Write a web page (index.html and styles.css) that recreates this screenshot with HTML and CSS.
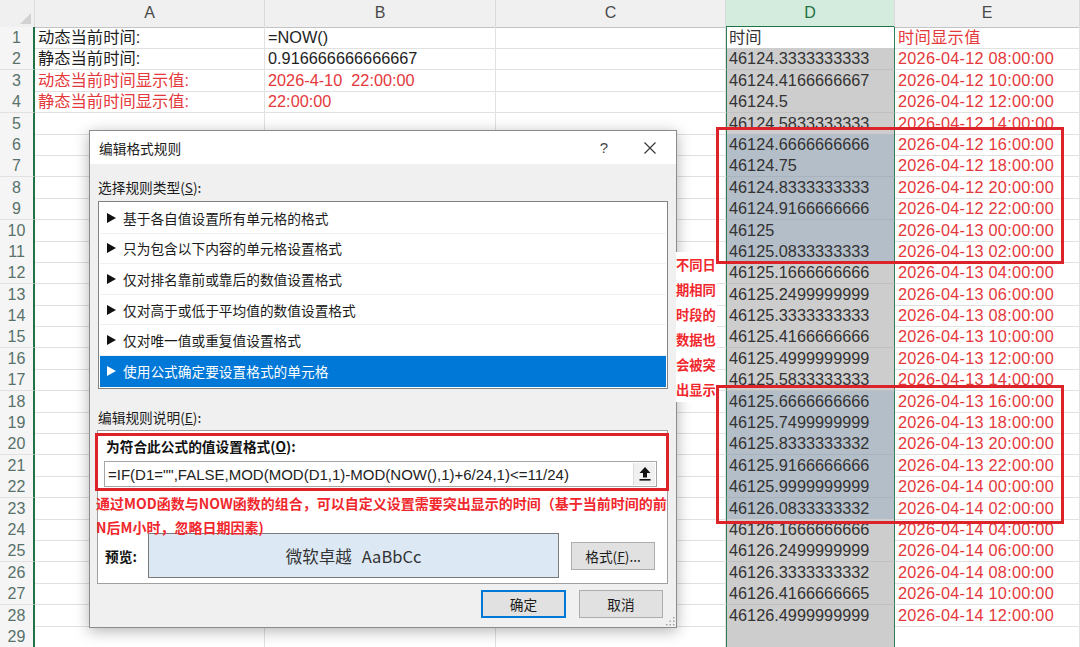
FILE: index.html
```html
<!DOCTYPE html>
<html lang="zh-CN">
<head>
<meta charset="utf-8">
<title>编辑格式规则</title>
<link rel="stylesheet" href="styles.css">
</head>
<body>
<div class="sheet">
  <div class="hdr">
    <div class="corner"></div><div>A</div><div>B</div><div>C</div><div class="hd">D</div><div>E</div>
  </div>
  <div class="row"><div class="rh">1</div><div>动态当前时间:</div><div>=NOW()</div><div></div><div class="d w">时间</div><div class="e">时间显示值</div></div>
  <div class="row"><div class="rh">2</div><div>静态当前时间:</div><div>0.916666666666667</div><div></div><div class="d">46124.3333333333</div><div class="e">2026-04-12 08:00:00</div></div>
  <div class="row"><div class="rh">3</div><div class="red">动态当前时间显示值:</div><div class="red">2026-4-10  22:00:00</div><div></div><div class="d">46124.4166666667</div><div class="e">2026-04-12 10:00:00</div></div>
  <div class="row"><div class="rh">4</div><div class="red">静态当前时间显示值:</div><div class="red">22:00:00</div><div></div><div class="d">46124.5</div><div class="e">2026-04-12 12:00:00</div></div>
  <div class="row"><div class="rh">5</div><div></div><div></div><div></div><div class="d">46124.5833333333</div><div class="e">2026-04-12 14:00:00</div></div>
  <div class="row"><div class="rh">6</div><div></div><div></div><div></div><div class="d hl">46124.6666666666</div><div class="e">2026-04-12 16:00:00</div></div>
  <div class="row"><div class="rh">7</div><div></div><div></div><div></div><div class="d hl">46124.75</div><div class="e">2026-04-12 18:00:00</div></div>
  <div class="row"><div class="rh">8</div><div></div><div></div><div></div><div class="d hl">46124.8333333333</div><div class="e">2026-04-12 20:00:00</div></div>
  <div class="row"><div class="rh">9</div><div></div><div></div><div></div><div class="d hl">46124.9166666666</div><div class="e">2026-04-12 22:00:00</div></div>
  <div class="row"><div class="rh">10</div><div></div><div></div><div></div><div class="d hl">46125</div><div class="e">2026-04-13 00:00:00</div></div>
  <div class="row"><div class="rh">11</div><div></div><div></div><div></div><div class="d hl">46125.0833333333</div><div class="e">2026-04-13 02:00:00</div></div>
  <div class="row"><div class="rh">12</div><div></div><div></div><div></div><div class="d">46125.1666666666</div><div class="e">2026-04-13 04:00:00</div></div>
  <div class="row"><div class="rh">13</div><div></div><div></div><div></div><div class="d">46125.2499999999</div><div class="e">2026-04-13 06:00:00</div></div>
  <div class="row"><div class="rh">14</div><div></div><div></div><div></div><div class="d">46125.3333333333</div><div class="e">2026-04-13 08:00:00</div></div>
  <div class="row"><div class="rh">15</div><div></div><div></div><div></div><div class="d">46125.4166666666</div><div class="e">2026-04-13 10:00:00</div></div>
  <div class="row"><div class="rh">16</div><div></div><div></div><div></div><div class="d">46125.4999999999</div><div class="e">2026-04-13 12:00:00</div></div>
  <div class="row"><div class="rh">17</div><div></div><div></div><div></div><div class="d">46125.5833333333</div><div class="e">2026-04-13 14:00:00</div></div>
  <div class="row"><div class="rh">18</div><div></div><div></div><div></div><div class="d hl">46125.6666666666</div><div class="e">2026-04-13 16:00:00</div></div>
  <div class="row"><div class="rh">19</div><div></div><div></div><div></div><div class="d hl">46125.7499999999</div><div class="e">2026-04-13 18:00:00</div></div>
  <div class="row"><div class="rh">20</div><div></div><div></div><div></div><div class="d hl">46125.8333333332</div><div class="e">2026-04-13 20:00:00</div></div>
  <div class="row"><div class="rh">21</div><div></div><div></div><div></div><div class="d hl">46125.9166666666</div><div class="e">2026-04-13 22:00:00</div></div>
  <div class="row"><div class="rh">22</div><div></div><div></div><div></div><div class="d hl">46125.9999999999</div><div class="e">2026-04-14 00:00:00</div></div>
  <div class="row"><div class="rh">23</div><div></div><div></div><div></div><div class="d hl">46126.0833333332</div><div class="e">2026-04-14 02:00:00</div></div>
  <div class="row"><div class="rh">24</div><div></div><div></div><div></div><div class="d">46126.1666666666</div><div class="e">2026-04-14 04:00:00</div></div>
  <div class="row"><div class="rh">25</div><div></div><div></div><div></div><div class="d">46126.2499999999</div><div class="e">2026-04-14 06:00:00</div></div>
  <div class="row"><div class="rh">26</div><div></div><div></div><div></div><div class="d">46126.3333333332</div><div class="e">2026-04-14 08:00:00</div></div>
  <div class="row"><div class="rh">27</div><div></div><div></div><div></div><div class="d">46126.4166666665</div><div class="e">2026-04-14 10:00:00</div></div>
  <div class="row"><div class="rh">28</div><div></div><div></div><div></div><div class="d">46126.4999999999</div><div class="e">2026-04-14 12:00:00</div></div>
  <div class="row"><div class="rh">29</div><div></div><div></div><div></div><div class="d"></div><div class="e"></div></div>

  <div class="dialog">
    <div class="dlg-title">
      <span class="dlg-name">编辑格式规则</span>
      <span class="dlg-help">?</span>
      <span class="dlg-close"><svg width="12" height="12" viewBox="0 0 12 12"><path d="M0.5 0.5L11.5 11.5M11.5 0.5L0.5 11.5" stroke="#333" stroke-width="1.1" fill="none"/></svg></span>
    </div>
    <div class="dlg-body">
      <div class="lbl lbl1">选择规则类型(<u>S</u>):</div>
      <div class="list">
        <div class="item"><span class="tri"></span>基于各自值设置所有单元格的格式</div>
        <div class="item"><span class="tri"></span>只为包含以下内容的单元格设置格式</div>
        <div class="item"><span class="tri"></span>仅对排名靠前或靠后的数值设置格式</div>
        <div class="item"><span class="tri"></span>仅对高于或低于平均值的数值设置格式</div>
        <div class="item"><span class="tri"></span>仅对唯一值或重复值设置格式</div>
        <div class="item sel"><span class="tri"></span>使用公式确定要设置格式的单元格</div>
      </div>
      <div class="lbl lbl2">编辑规则说明(<u>E</u>):</div>
      <div class="panel">
        <div class="ph">为符合此公式的值设置格式(<u>O</u>):</div>
        <div class="input">
          <span class="formula">=IF(D1="",FALSE,MOD(MOD(D1,1)-MOD(NOW(),1)+6/24,1)&lt;=11/24)</span>
          <span class="pick"><svg width="14" height="16" viewBox="0 0 14 16"><path d="M7 1L12.5 7H9V11.5H5V7H1.5Z" fill="#111"/><rect x="1.5" y="13" width="11" height="1.6" fill="#111"/></svg></span>
        </div>
        <div class="prev-row">
          <span class="prev-lbl">预览:</span>
          <div class="prev"><span>微软卓越</span><span>AaBbCc</span></div>
          <button class="btn fmt">格式(<u>F</u>)...</button>
        </div>
      </div>
      <div class="actions">
        <button class="btn ok">确定</button>
        <button class="btn">取消</button>
      </div>
    </div>
    <svg class="grip" width="10" height="10" viewBox="0 0 10 10"><g fill="#9a9a9a"><rect x="8" y="1" width="1.4" height="1.4"/><rect x="8" y="4.5" width="1.4" height="1.4"/><rect x="4.5" y="4.5" width="1.4" height="1.4"/><rect x="8" y="8" width="1.4" height="1.4"/><rect x="4.5" y="8" width="1.4" height="1.4"/><rect x="1" y="8" width="1.4" height="1.4"/></g></svg>
  </div>

  <div class="note">通过MOD函数与NOW函数的组合，可以自定义设置需要突出显示的时间（基于当前时间的前<br>N后M小时，忽略日期因素)</div>
  <div class="vnote">不同日期相同时段的数据也会被突出显示</div>
  <div class="mark m1"></div>
  <div class="mark m2"></div>
  <div class="mark m3"></div>
</div>
</body>
</html>
```
FILE: styles.css
```css
body {
  margin: 0;
  background: #fff;
}

.sheet {
  position: relative;
  width: 1080px;
  height: 647px;
  overflow: hidden;
  font-family: "Liberation Sans", "Noto Sans CJK SC", sans-serif;
}

.hdr,
.row {
  display: grid;
  grid-template-columns: 35px 230px 231px 230px 169px 185px;
}

.hdr {
  height: 27px;
}

.hdr > div {
  box-sizing: border-box;
  background: #f0f0f0;
  border-right: 1px solid #dadada;
  border-bottom: 1px solid #c4c4c4;
  color: #4a4a4a;
  font-size: 16px;
  line-height: 26px;
  text-align: center;
}

.hdr .hd {
  background: #d3ecdd;
  color: #1f7244;
  border-bottom: 2px solid #217346;
}

.hdr .corner {
  display: flex;
  justify-content: flex-end;
  align-items: flex-end;
  padding: 0 3px 3px 0;
}

.corner::after {
  content: "";
  border-left: 11px solid transparent;
  border-bottom: 11px solid #d2d2d2;
}

.row {
  height: 21.4px;
}

.row > div {
  box-sizing: border-box;
  border-right: 1px solid #e1e1e1;
  border-bottom: 1px solid #e1e1e1;
  font-size: 16.3px;
  line-height: 21px;
  padding-left: 3px;
  white-space: pre;
  color: #1e1e1e;
}

.row .rh {
  background: #f5f5f5;
  border-right: 2px solid #217346;
  text-align: center;
  padding: 0;
  color: #58716a;
  font-size: 16px;
}

.row .d {
  background: #cdcdcd;
  border-left: 1px solid #2f7d53;
  border-right: 1px solid #2f7d53;
  border-bottom-color: #c1c1c1;
  padding-left: 2px;
  color: #333;
}

.row .d.hl {
  background: #b4bec8;
  border-bottom-color: #a9b3bd;
}

.row .d.w {
  background: #fff;
  border-bottom-color: #e1e1e1;
}

.row .e,
.row .red {
  color: #e5383b;
}

.row .e {
  letter-spacing: 0.25px;
}

/* dialog */
.dialog {
  position: absolute;
  left: 89px;
  top: 130px;
  width: 588px;
  height: 498px;
  box-sizing: border-box;
  border: 1px solid #8c8c8c;
  background: #f0f0f0;
  box-shadow: 0 3px 14px rgba(0, 0, 0, 0.3);
  font-family: "Noto Sans CJK SC", "Liberation Sans", sans-serif;
  font-size: 13.7px;
  color: #1b1b1b;
}

.dlg-title {
  height: 33px;
  background: #fff;
  display: flex;
  align-items: center;
}

.dlg-name {
  flex: 1;
  padding-left: 9px;
  line-height: 18px;
}

.dlg-help {
  width: 46px;
  text-align: center;
  font-family: "Liberation Sans", sans-serif;
  font-size: 15px;
  color: #444;
}

.dlg-close {
  width: 46px;
  margin-right: 3px;
  display: flex;
  justify-content: center;
}

.dlg-close svg {
  display: block;
}

.dlg-body {
  padding: 0 8px;
  display: flex;
  flex-direction: column;
}

.lbl {
  line-height: 18px;
  height: 18px;
}

.lbl1 {
  margin-top: 14px;
}

.lbl2 {
  margin-top: 19px;
}

.list {
  margin-top: 5px;
  height: 188px;
  box-sizing: border-box;
  border: 1px solid #828282;
  background: #fff;
  padding: 1px;
}

.item {
  height: 30.6px;
  box-sizing: border-box;
  border-bottom: 1px solid #f0f0f0;
  display: flex;
  align-items: center;
  line-height: 18px;
}

.item:last-child {
  border-bottom: 0;
}

.tri {
  width: 0;
  height: 0;
  margin-left: 7px;
  margin-right: 7px;
  border-left: 9px solid #111;
  border-top: 5px solid transparent;
  border-bottom: 5px solid transparent;
}

.item.sel {
  background: #0078d7;
  color: #fff;
}

.item.sel .tri {
  border-left-color: #fff;
}

.panel {
  margin-top: 4px;
  margin-left: -1px;
  box-sizing: border-box;
  height: 154px;
  border: 1px solid #a0a0a0;
  background: #fff;
  padding: 6px 10px 5px 6px;
  display: flex;
  flex-direction: column;
}

.ph {
  margin-left: 2px;
  line-height: 18px;
  height: 18px;
  font-weight: 700;
  color: #111;
}

.input {
  margin-top: 6px;
  height: 26px;
  box-sizing: border-box;
  border: 1px solid #a6a6a6;
  display: flex;
  align-items: center;
}

.formula {
  flex: 1;
  padding-left: 3px;
  font-family: "Liberation Sans", sans-serif;
  font-size: 15px;
  color: #222;
  white-space: nowrap;
}

.pick {
  width: 22px;
  height: 22px;
  margin-right: 1px;
  box-sizing: border-box;
  background: #f0f0f0;
  border-left: 1px solid #dcdcdc;
  display: flex;
  align-items: center;
  justify-content: center;
}

.prev-row {
  margin-top: 46px;
  display: flex;
  align-items: center;
}

.prev-lbl {
  width: 43px;
  margin-left: 1px;
  font-weight: 700;
  color: #111;
  line-height: 18px;
}

.prev {
  width: 411px;
  height: 45px;
  box-sizing: border-box;
  border: 1px solid #7a7a7a;
  background: #dce9f5;
  display: flex;
  align-items: center;
  justify-content: center;
  gap: 10px;
  font-size: 16.5px;
  color: #333;
}

.btn {
  box-sizing: border-box;
  height: 28px;
  background: #e1e1e1;
  border: 1px solid #adadad;
  font-family: "Noto Sans CJK SC", "Liberation Sans", sans-serif;
  font-size: 13.7px;
  color: #1b1b1b;
  padding: 0;
  line-height: 18px;
}

.btn.fmt {
  width: 84px;
  margin-left: 12px;
}

.actions {
  margin-top: 6px;
  margin-right: 5px;
  display: flex;
  justify-content: flex-end;
  gap: 13px;
}

.actions .btn {
  width: 84px;
}

.actions .btn.ok {
  width: 85px;
  border: 2px solid #0078d7;
}

.grip {
  position: absolute;
  right: 1px;
  bottom: 1px;
}

/* annotations */
.note {
  position: absolute;
  left: 96px;
  top: 491px;
  white-space: nowrap;
  font-family: "Noto Sans CJK SC", sans-serif;
  font-weight: 700;
  font-size: 14px;
  line-height: 24px;
  color: #f0282d;
}

.vnote {
  position: absolute;
  left: 676px;
  top: 252px;
  width: 41px;
  background: #fff;
  word-break: break-all;
  font-family: "Noto Sans CJK SC", sans-serif;
  font-weight: 700;
  font-size: 13.3px;
  line-height: 25px;
  color: #f0282d;
}

.mark {
  position: absolute;
  border: 3px solid #dc2329;
}

.m1 {
  left: 716px;
  top: 127px;
  width: 348px;
  height: 137px;
  box-sizing: border-box;
}

.m2 {
  left: 716px;
  top: 385px;
  width: 348px;
  height: 139px;
  box-sizing: border-box;
}

.m3 {
  left: 95px;
  top: 433px;
  width: 574px;
  height: 58px;
  box-sizing: border-box;
}
```
